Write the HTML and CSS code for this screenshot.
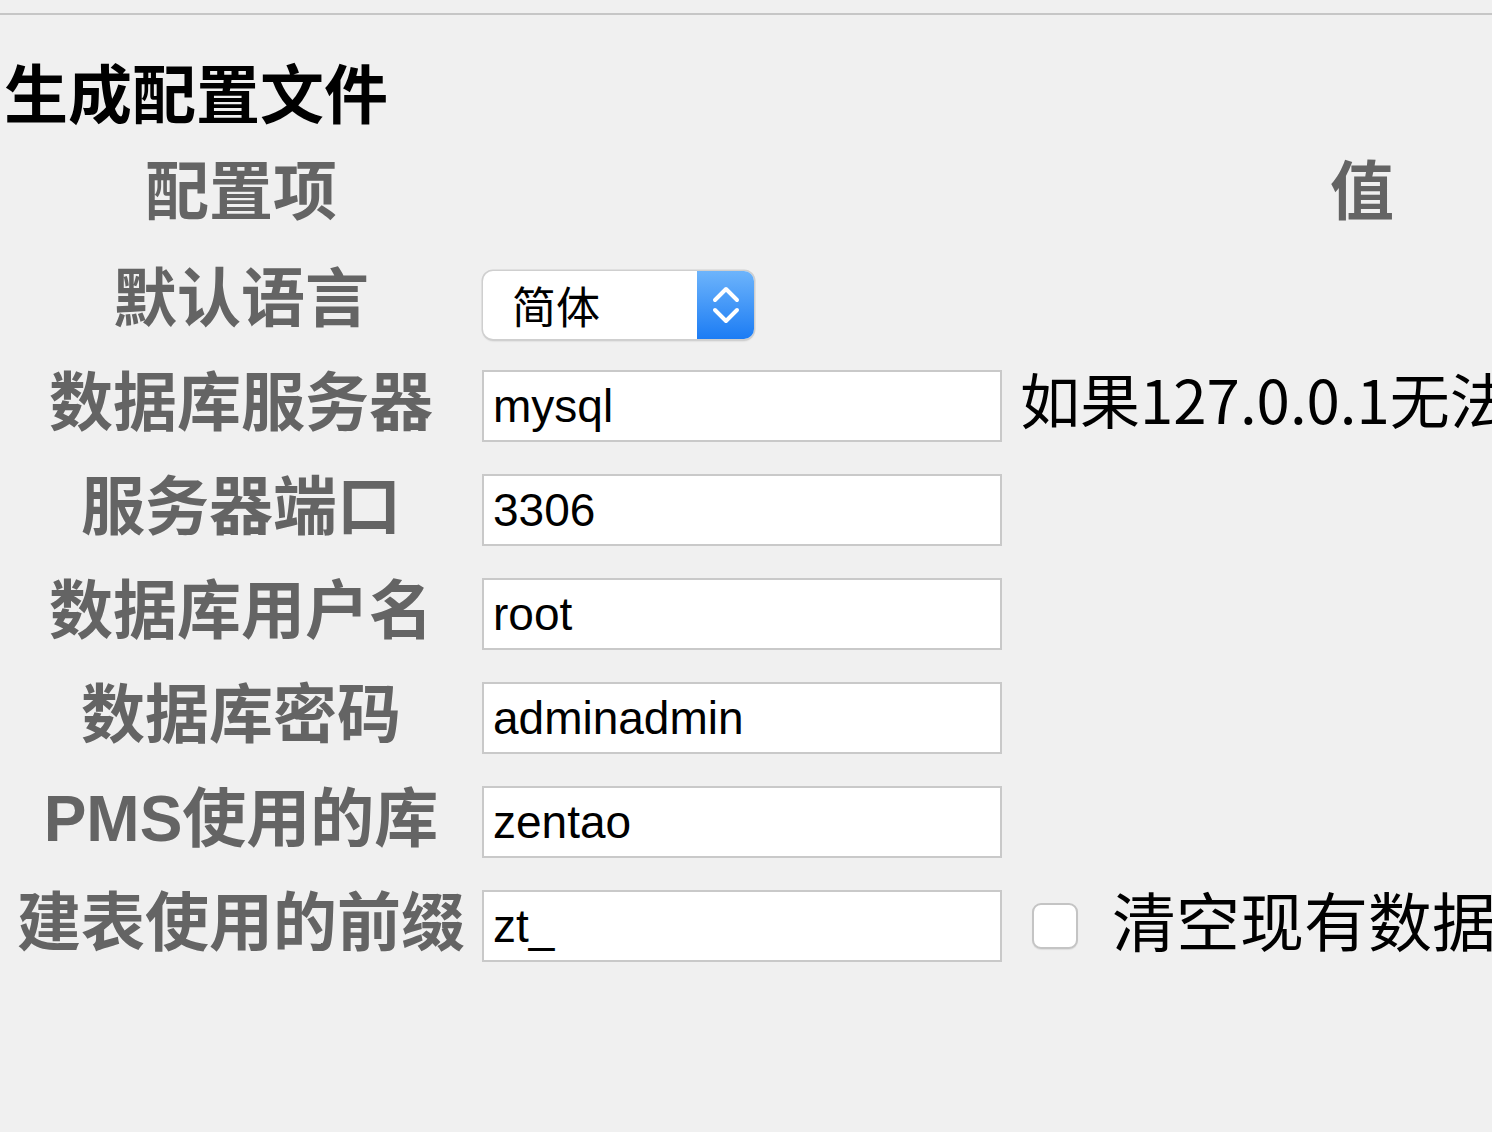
FILE: index.html
```html
<!DOCTYPE html>
<html lang="zh-CN">
<head>
<meta charset="utf-8">
<title>生成配置文件</title>
<link rel="stylesheet" href="styles.css">
</head>
<body>
<div class="page">
  <div class="topline"></div>
  <h1 class="title">生成配置文件</h1>
  <div class="form">
    <div class="head label-cell">配置项</div>
    <div class="head value-head">值</div>

    <div class="label-cell">默认语言</div>
    <div class="value-cell">
      <div class="select">
        <span class="select-text">简体</span>
        <span class="select-btn">
          <svg width="30" height="44" viewBox="0 0 30 44" fill="none" stroke="#fff" stroke-width="4" stroke-linecap="round" stroke-linejoin="round">
            <polyline points="4,17 15,6 26,17"/>
            <polyline points="4,27 15,38 26,27"/>
          </svg>
        </span>
      </div>
    </div>

    <div class="label-cell">数据库服务器</div>
    <div class="value-cell">
      <div class="input">mysql</div>
      <span class="hint">如果127.0.0.1无法</span>
    </div>

    <div class="label-cell">服务器端口</div>
    <div class="value-cell"><div class="input">3306</div></div>

    <div class="label-cell">数据库用户名</div>
    <div class="value-cell"><div class="input">root</div></div>

    <div class="label-cell">数据库密码</div>
    <div class="value-cell"><div class="input">adminadmin</div></div>

    <div class="label-cell">PMS使用的库</div>
    <div class="value-cell"><div class="input">zentao</div></div>

    <div class="label-cell">建表使用的前缀</div>
    <div class="value-cell">
      <div class="input">zt_</div>
      <span class="checkbox"></span>
      <span class="check-label">清空现有数据</span>
    </div>
  </div>
</div>
</body>
</html>
```

FILE: styles.css
```css
html, body {
  margin: 0;
  padding: 0;
  background: #f0f0f0;
  overflow: hidden;
  width: 1492px;
  height: 1132px;
}

.page {
  width: 2400px;
  font-family: "Liberation Sans", "Noto Sans CJK SC", sans-serif;
}

.topline {
  margin-top: 13px;
  height: 2px;
  background: #c6c6c6;
  width: 100%;
}

.title {
  margin: 37px 0 0 4px;
  font-family: "Noto Sans CJK SC", sans-serif;
  font-size: 64px;
  font-weight: 700;
  line-height: 76px;
  height: 76px;
  color: #000;
}

.form {
  display: grid;
  grid-template-columns: 482px 1760px;
  grid-auto-rows: 104px;
  align-items: center;
  margin-top: 15px;
}

.label-cell,
.value-head {
  text-align: center;
  font-family: "Liberation Sans", "Noto Sans CJK SC", sans-serif;
  font-weight: 700;
  font-size: 64px;
  line-height: 76px;
  color: #646464;
  white-space: nowrap;
}

.head {
  padding-bottom: 6px;
}

.value-cell {
  display: flex;
  align-items: center;
  padding-top: 6px;
}

.input {
  box-sizing: border-box;
  width: 520px;
  height: 72px;
  border: 2px solid #c9c9c9;
  background: #fff;
  padding-left: 9px;
  font-family: "Liberation Sans", sans-serif;
  font-size: 46px;
  line-height: 68px;
  color: #000;
}

.hint {
  margin-left: 18px;
  margin-top: -16px;
  font-family: "Noto Sans CJK SC", sans-serif;
  font-size: 60px;
  line-height: 72px;
  color: #000;
  white-space: nowrap;
}

.select {
  box-sizing: border-box;
  display: flex;
  width: 271px;
  height: 68px;
  margin-top: 6px;
  margin-left: 1px;
  border-radius: 10px;
  background: #fff;
  box-shadow: 0 0 0 1.5px #cfcfcf, 0 2px 2px rgba(0,0,0,0.18);
  overflow: hidden;
}

.select-text {
  flex: 1;
  padding-left: 29px;
  font-family: "Noto Sans CJK SC", sans-serif;
  font-size: 44px;
  line-height: 68px;
  color: #000;
}

.select-btn {
  width: 57px;
  display: flex;
  align-items: center;
  justify-content: center;
  background: linear-gradient(#6db4fb, #1c7cf4);
}

.checkbox {
  box-sizing: border-box;
  margin-left: 30px;
  width: 46px;
  height: 46px;
  border: 2px solid #c4c4c4;
  border-radius: 9px;
  background: #fff;
  box-shadow: 0 1px 1px rgba(0,0,0,0.08);
}

.check-label {
  margin-left: 34px;
  margin-top: -16px;
  font-family: "Noto Sans CJK SC", sans-serif;
  font-size: 64px;
  line-height: 72px;
  color: #000;
  white-space: nowrap;
}
```
